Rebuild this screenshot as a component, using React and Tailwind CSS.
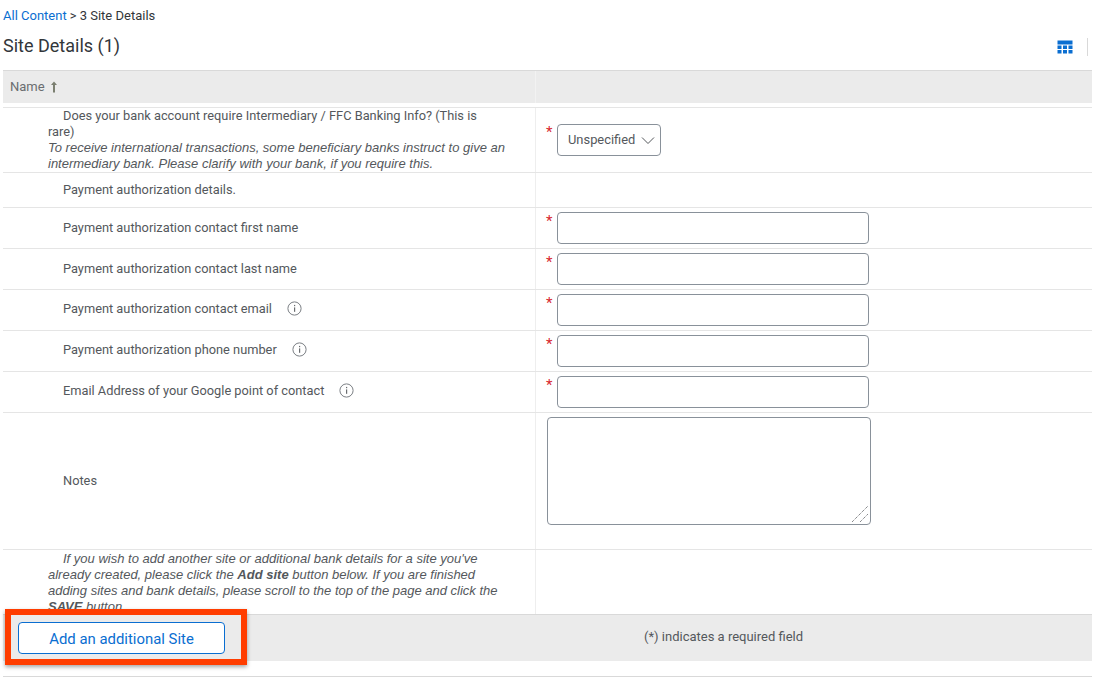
import React from "react";

function Info() {
  return (
    <svg width="15" height="15" viewBox="0 0 15 15" fill="none" className="shrink-0">
      <circle cx="7.5" cy="7.5" r="6.6" stroke="#7b7f84" strokeWidth="1" />
      <rect x="7" y="6.4" width="1.2" height="4.4" fill="#6a6d70" />
      <rect x="7" y="3.9" width="1.2" height="1.3" fill="#6a6d70" />
    </svg>
  );
}

function Star({ className = "" }) {
  return <span className={"w-[11px] shrink-0 text-[15px] leading-none text-[#d7282f] " + className}>*</span>;
}

function Field() {
  return (
    <div className="flex h-full items-start pl-[10px] pt-[4px]">
      <Star className="mt-[2px]" />
      <input className="h-[32px] w-[312px] rounded-[4px] border border-[#89919a] bg-white outline-none" />
    </div>
  );
}

function Row({ h, label, info, children }) {
  return (
    <div className={"flex border-b border-[#e5e5e5] " + h}>
      <div className={"flex w-[533px] shrink-0 items-center border-r border-[#eeeeee] pl-[60px] text-[12.8px] text-[#54585c] " + (info ? "pb-[3px]" : "pb-[1px]")}>
        <span>{label}</span>
        {info && <span className="ml-[15px] flex"><Info /></span>}
      </div>
      <div className="min-w-0 flex-1">{children}</div>
    </div>
  );
}

export default function App() {
  return (
    <div className="relative h-[691px] w-[1096px] overflow-hidden bg-white pl-[3px] pr-[4px] font-['Roboto',sans-serif]">
      <div className="flex h-[31px] items-center pt-[1px] text-[13px] text-[#32363a]">
        <span className="text-[#0a6ed1]">All Content</span>
        <span className="ml-[3px]">&gt; 3 Site Details</span>
      </div>
      <div className="flex h-[39px] items-start justify-between">
        <h1 className="pt-[4px] text-[18px] leading-[22px] text-[#32363a]">Site Details (1)</h1>
        <div className="flex items-center pt-[7px]">
          <svg width="16" height="14" viewBox="0 0 16 14" className="mr-[14px]">
            <g fill="#0a6ed1">
              <rect x="0.5" y="0.5" width="15" height="4" />
              <rect x="0.5" y="5.5" width="4" height="3.5" />
              <rect x="6" y="5.5" width="4" height="3.5" />
              <rect x="11.5" y="5.5" width="4" height="3.5" />
              <rect x="0.5" y="10" width="4" height="3.5" />
              <rect x="6" y="10" width="4" height="3.5" />
              <rect x="11.5" y="10" width="4" height="3.5" />
            </g>
          </svg>
          <span className="mr-[4px] h-[18px] w-px bg-[#d9d9d9]" />
        </div>
      </div>

      <div className="flex h-[33px] border-t border-[#d9d9d9] bg-[#ebebeb]">
        <div className="flex w-[533px] shrink-0 items-center gap-[5px] border-r border-[#f2f2f2] pl-[7px] text-[13px] text-[#6a6d70]">
          Name
          <svg width="8" height="12" viewBox="0 0 8 12">
            <path d="M4 0.5 L7 4 H5 V11.5 H3 V4 H1 Z" fill="#7b7f70" />
          </svg>
        </div>
      </div>
      <div className="h-[5px] border-b border-[#e5e5e5]" />

      <div className="flex h-[65px] border-b border-[#e5e5e5]">
        <div className="w-[533px] shrink-0 border-r border-[#eeeeee] pl-[45px] pr-[26px] text-[12.8px] leading-[16px] text-[#54585c]">
          <div className="indent-[15px] pr-[10px]">Does your bank account require Intermediary / FFC Banking Info? (This is rare)</div>
          <div className="font-['Liberation_Sans',sans-serif] text-[13px] italic">To receive international transactions, some beneficiary banks instruct to give an intermediary bank. Please clarify with your bank, if you require this.</div>
        </div>
        <div className="flex items-start pl-[10px] pt-[16px]">
          <Star className="mt-[1px]" />
          <div className="flex h-[32px] w-[104px] items-center justify-between rounded-[4px] border border-[#89919a] pl-[10px] pr-[5px] text-[12.9px] text-[#54585c]">
            Unspecified
            <svg width="14" height="9" viewBox="0 0 14 9" fill="none">
              <path d="M1 1.5 L7 7.5 L13 1.5" stroke="#54585c" strokeWidth="1" />
            </svg>
          </div>
        </div>
      </div>

      <Row h="h-[35px]" label="Payment authorization details." />
      <Row h="h-[41px]" label="Payment authorization contact first name"><Field /></Row>
      <Row h="h-[41px]" label="Payment authorization contact last name"><Field /></Row>
      <Row h="h-[41px]" label="Payment authorization contact email" info><Field /></Row>
      <Row h="h-[41px]" label="Payment authorization phone number" info><Field /></Row>
      <Row h="h-[41px]" label="Email Address of your Google point of contact" info><Field /></Row>
      <Row h="h-[137px]" label="Notes">
        <div className="relative ml-[11px] mt-[4px] w-fit">
          <textarea className="block h-[108px] w-[324px] resize-none rounded-[4px] border border-[#89919a] bg-white outline-none" />
          <svg width="18" height="18" viewBox="0 0 18 18" className="absolute bottom-[2px] right-[2px]">
            <path d="M1 17 L17 1 M9 17 L17 9" stroke="#55585c" strokeWidth="1" strokeDasharray="1 1" fill="none" />
          </svg>
        </div>
      </Row>

      <div className="flex h-[64px] overflow-hidden">
        <div className="w-[533px] shrink-0 border-r border-[#eeeeee] pl-[45px] pr-[26px] pt-[1px] font-['Liberation_Sans',sans-serif] text-[13px] italic leading-[16px] text-[#54585c]">
          <div className="indent-[15px]">
            If you wish to add another site or additional bank details for a site you've already created, please click the <b>Add site</b> button below. If you are finished adding sites and bank details, please scroll to the top of the page and click the <b>SAVE</b> button.
          </div>
        </div>
      </div>

      <div className="flex h-[47px] items-center border-t border-[#d9d9d9] bg-[#ebebeb]">
        <div className="flex w-[533px] shrink-0 pl-[15px]">
          <button className="h-[32px] w-[207px] rounded-[4px] border border-[#0a6ed1] bg-white pt-[2px] text-[14.9px] text-[#0a6ed1]">Add an additional Site</button>
        </div>
        <div className="flex-1 pb-[2px] pl-[108px] text-[13px] text-[#54585c]">(*) indicates a required field</div>
      </div>
      <div className="mt-[15px] h-px bg-[#d9d9d9]" />

      <div className="pointer-events-none absolute left-[5px] top-[609px] h-[56px] w-[242px] border-[6px] border-[#ff3d00] shadow-[0_2px_4px_rgba(0,0,0,0.35)]" />
    </div>
  );
}
